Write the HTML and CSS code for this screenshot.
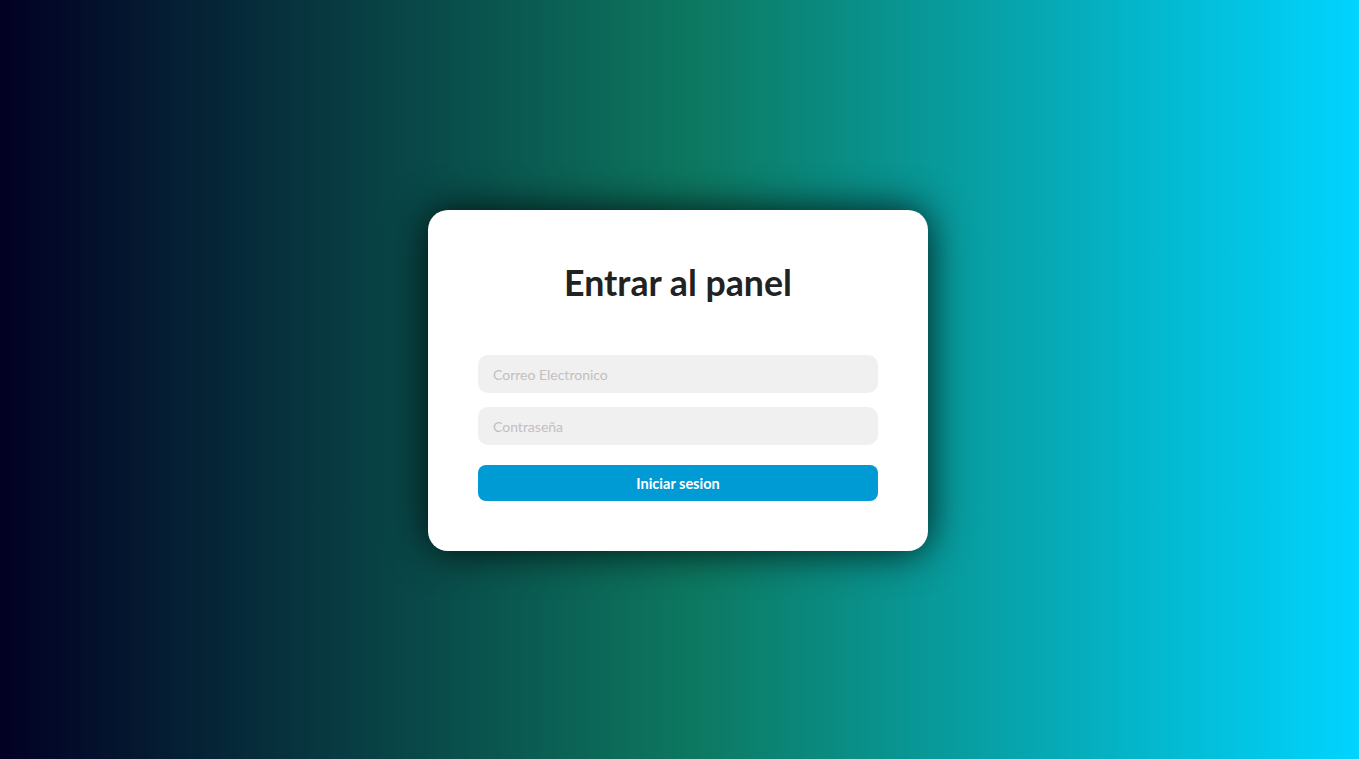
FILE: index.html
```html
<!DOCTYPE html>
<html lang="es">
<head>
<meta charset="utf-8">
<title>Entrar al panel</title>
<link rel="stylesheet" href="styles.css">
</head>
<body>
<main class="page">
  <form class="card">
    <h1 class="title">Entrar al panel</h1>
    <input class="field" type="email" placeholder="Correo Electronico">
    <input class="field" type="password" placeholder="Contraseña">
    <button class="btn" type="button">Iniciar sesion</button>
  </form>
</main>
</body>
</html>
```
FILE: styles.css
```css
* { box-sizing: border-box; }
html, body { margin: 0; height: 100%; }
body {
  font-family: Lato, "Liberation Sans", sans-serif;
  background: linear-gradient(90deg, #020024 0%, #0d7860 51%, #00d4ff 100%);
}
.page {
  height: 100%;
  display: flex;
  align-items: center;
  justify-content: center;
  padding: 2px 3px 0 0;
}
.card {
  width: 500px;
  background: #fff;
  border-radius: 20px;
  padding: 51px 50px 50px;
  display: flex;
  flex-direction: column;
  box-shadow: 0 0 40px rgba(0, 0, 0, 0.85);
}
.title {
  margin: 0 0 51px;
  text-align: center;
  font-size: 35.7px;
  font-weight: 700;
  color: #222;
  line-height: 43px;
}
.field {
  height: 38px;
  border: none;
  outline: none;
  background: #f0f0f0;
  border-radius: 10px;
  padding: 0 15px;
  font-family: inherit;
  font-size: 14px;
  color: #333;
  margin-bottom: 14px;
}
.field::placeholder { color: #c2bfbf; }
.field + .btn { margin-top: 6px; }
.btn {
  height: 36px;
  border: none;
  border-radius: 8px;
  background: #009ad4;
  color: #fff;
  font-family: inherit;
  font-weight: 700;
  font-size: 14.5px;
  cursor: pointer;
}
```
